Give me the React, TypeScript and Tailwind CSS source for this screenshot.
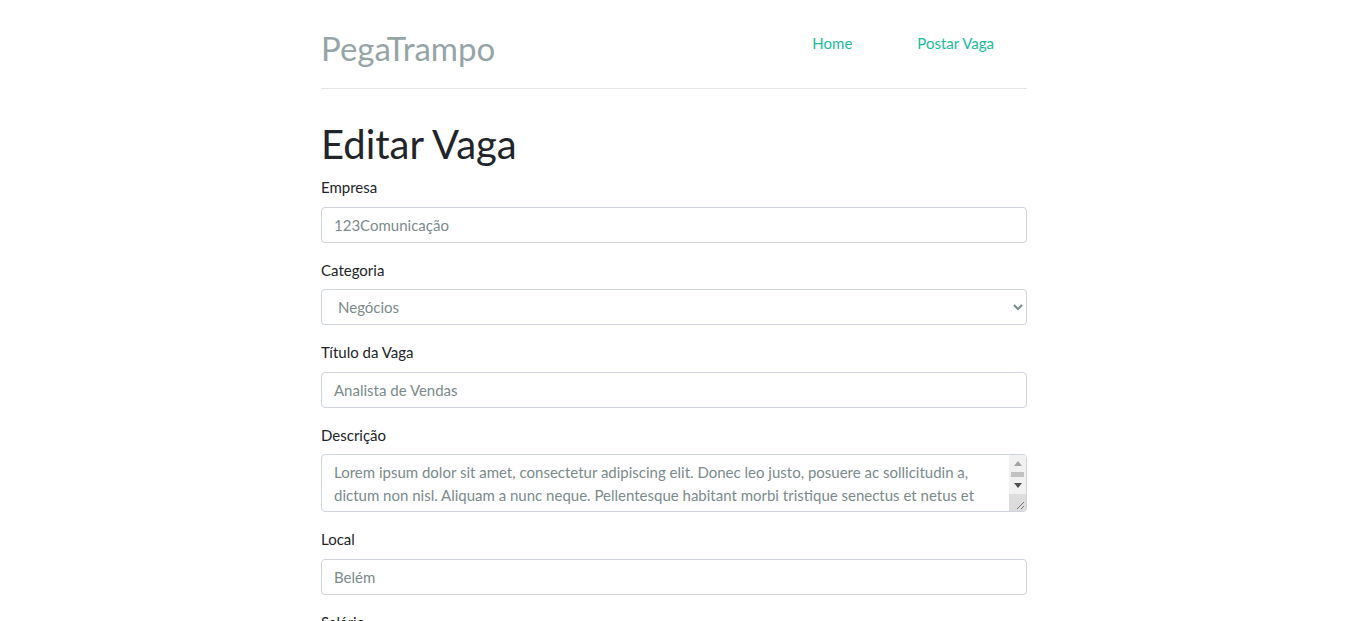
const fieldClass =
  "block w-full rounded-[4px] border border-[#ced4da] bg-white px-3 py-[6px] text-[15px] leading-[22.5px] text-[#7b8a8b] outline-none";

const Field = ({ label, children }: { label: string; children: React.ReactNode }) => (
  <div className="mb-4">
    <label className="mb-2 block text-[15px] leading-[22.5px] text-[#212529]">{label}</label>
    {children}
  </div>
);

// textarea scrollbar drawn by hand, the browser hides its own in screenshots
const FakeScrollbar = () => (
  <div className="pointer-events-none absolute top-[1px] right-[1px] bottom-[1px] flex w-[17px] flex-col overflow-hidden rounded-tr-[3px] bg-[#f1f1f1]">
    <div className="flex h-[17px] items-center justify-center">
      <svg width="8" height="5" viewBox="0 0 8 5">
        <path d="M4 0 L8 5 L0 5 Z" fill="#a3a3a3" />
      </svg>
    </div>
    <div className="mx-[2px] h-[5px] bg-[#c1c1c1]" />
    <div className="flex h-[16px] items-center justify-center">
      <svg width="8" height="5" viewBox="0 0 8 5">
        <path d="M0 0 L8 0 L4 5 Z" fill="#505050" />
      </svg>
    </div>
    <div className="mt-auto h-[17px] bg-[#dcdcdc]">
      <svg width="17" height="17" viewBox="0 0 17 17">
        <path d="M15 8 L8 15 M15 12 L12 15" stroke="#7a7a7a" strokeWidth="1" />
      </svg>
    </div>
  </div>
);

export default function App() {
  return (
    <div className="h-[621px] overflow-hidden bg-white pt-6 pr-[1px] font-['Lato','Open_Sans',sans-serif]">
      <div className="mx-auto max-w-[736px] px-[15px]">
        <header className="flex items-start justify-between border-b border-[#e5e5e5] pb-4">
          <h3 className="text-[33px] leading-[48px] font-normal text-[#95a5a6]">PegaTrampo</h3>
          <nav className="mr-[1px] flex">
            <a href="#" className="py-2 pr-[33px] pl-8 text-[15px] leading-[22.5px] text-[#18bc9c]">
              Home
            </a>
            <a href="#" className="px-8 py-2 text-[15px] leading-[22.5px] text-[#18bc9c]">
              Postar Vaga
            </a>
          </nav>
        </header>

        <h1 className="mt-[31px] mb-2 text-[40px] leading-[48px] font-normal text-[#212529]">Editar Vaga</h1>

        <form>
          <Field label="Empresa">
            <input className={`${fieldClass} h-[36px]`} defaultValue="123Comunicação" readOnly />
          </Field>
          <Field label="Categoria">
            <select className={`${fieldClass} h-[36px]`} defaultValue="Negócios">
              <option>Negócios</option>
              <option>Tecnologia</option>
              <option>Design</option>
            </select>
          </Field>
          <Field label="Título da Vaga">
            <input className={`${fieldClass} h-[36px]`} defaultValue="Analista de Vendas" readOnly />
          </Field>
          <Field label="Descrição">
            <div className="relative">
              <textarea
                rows={2}
                readOnly
                className={`${fieldClass} h-[58px] resize-none overflow-hidden pr-[29px]`}
                defaultValue="Lorem ipsum dolor sit amet, consectetur adipiscing elit. Donec leo justo, posuere ac sollicitudin a, dictum non nisl. Aliquam a nunc neque. Pellentesque habitant morbi tristique senectus et netus et malesuada fames ac turpis egestas. Vivamus id lorem in ligula ultrices varius."
              />
              <FakeScrollbar />
            </div>
          </Field>
          <Field label="Local">
            <input className={`${fieldClass} h-[36px]`} defaultValue="Belém" readOnly />
          </Field>
          <Field label="Salário">
            <input className={`${fieldClass} h-[36px]`} defaultValue="R$ 2.500,00" readOnly />
          </Field>
        </form>
      </div>
    </div>
  );
}
